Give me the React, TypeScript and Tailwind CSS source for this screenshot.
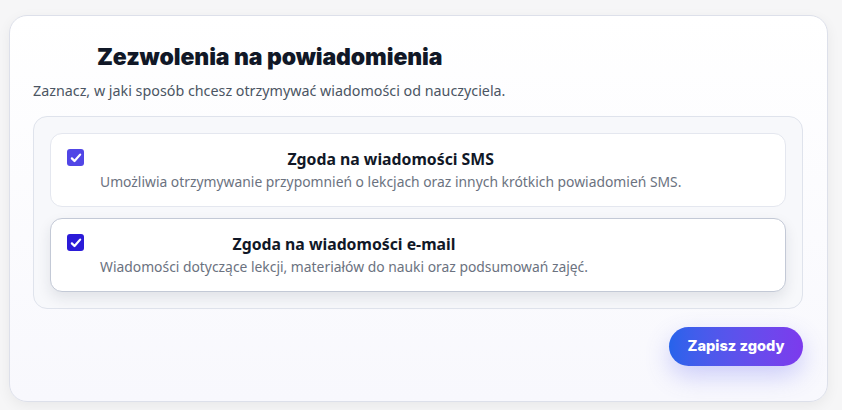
import { useState } from 'react';

interface Consent {
  id: string;
  title: string;
  description: string;
}

const consents: Consent[] = [
  {
    id: 'sms',
    title: 'Zgoda na wiadomości SMS',
    description: 'Umożliwia otrzymywanie przypomnień o lekcjach oraz innych krótkich powiadomień SMS.',
  },
  {
    id: 'email',
    title: 'Zgoda na wiadomości e-mail',
    description: 'Wiadomości dotyczące lekcji, materiałów do nauki oraz podsumowań zajęć.',
  },
];

function CheckMark() {
  return (
    <svg viewBox="0 0 16 16" className="w-[12px] h-[12px]" fill="none">
      <path d="M2.5 8.5l3.5 3.5 7.5-8.5" stroke="white" strokeWidth="3" strokeLinecap="round" strokeLinejoin="round" />
    </svg>
  );
}

export default function App() {
  const [checked, setChecked] = useState<Record<string, boolean>>({ sms: true, email: true });

  return (
    <div className="w-[842px] h-[410px] bg-[#f6f6f7] pt-[15px] pl-[9px] font-['Noto_Sans',sans-serif]">
      <div className="w-[819px] h-[387px] rounded-[18px] border border-[#dde0ea] bg-gradient-to-b from-white to-[#f8f8fd] shadow-[0_4px_14px_rgba(0,0,0,0.06)] pt-[26px] pl-[23px] pr-[24px] flex flex-col">
        <h1 className="ml-[64px] text-[23px] leading-[30px] font-black tracking-[-0.1px] text-[#111827] font-['Inter',sans-serif]">
          Zezwolenia na powiadomienia
        </h1>
        <p className="mt-[9px] text-[14.3px] leading-[20px] text-[#4b5563]">
          Zaznacz, w jaki sposób chcesz otrzymywać wiadomości od nauczyciela.
        </p>

        <div className="mt-[15px] rounded-[14px] border border-[#dfe3ec] bg-[#f7f8fb] p-[16px] flex flex-col gap-[11px]">
          {consents.map((c, i) => (
            <label
              key={c.id}
              className={`flex items-start gap-[16px] rounded-[12px] bg-white px-[16px] pt-[14px] pb-[14px] cursor-pointer ${
                i === 1
                  ? 'border border-[#c3c9d6] shadow-[0_6px_14px_rgba(30,41,59,0.10)]'
                  : 'border border-[#e4e7ef]'
              }`}
            >
              <span
                onClick={() => setChecked((s) => ({ ...s, [c.id]: !s[c.id] }))}
                className={`mt-px w-[17px] h-[17px] shrink-0 rounded-[3px] flex items-center justify-center ${
                  i === 1 ? 'bg-[#2b1bd8]' : 'bg-[#5146e6]'
                }`}
              >
                {checked[c.id] && <CheckMark />}
              </span>
              <span className="flex flex-col text-center">
                <span className="text-[15.8px] leading-[22px] font-bold text-[#111827]">{c.title}</span>
                <span className="mt-[2px] text-[13.86px] leading-[20px] text-[#6b7280]">{c.description}</span>
              </span>
            </label>
          ))}
        </div>

        <div className="mt-[18px] flex justify-end">
          <button className="h-[39px] w-[134px] rounded-full bg-gradient-to-r from-[#2563eb] to-[#7c3aed] text-white text-[14.6px] font-extrabold font-['Inter',sans-serif] shadow-[0_10px_24px_rgba(99,102,241,0.30)]">
            Zapisz zgody
          </button>
        </div>
      </div>
    </div>
  );
}
